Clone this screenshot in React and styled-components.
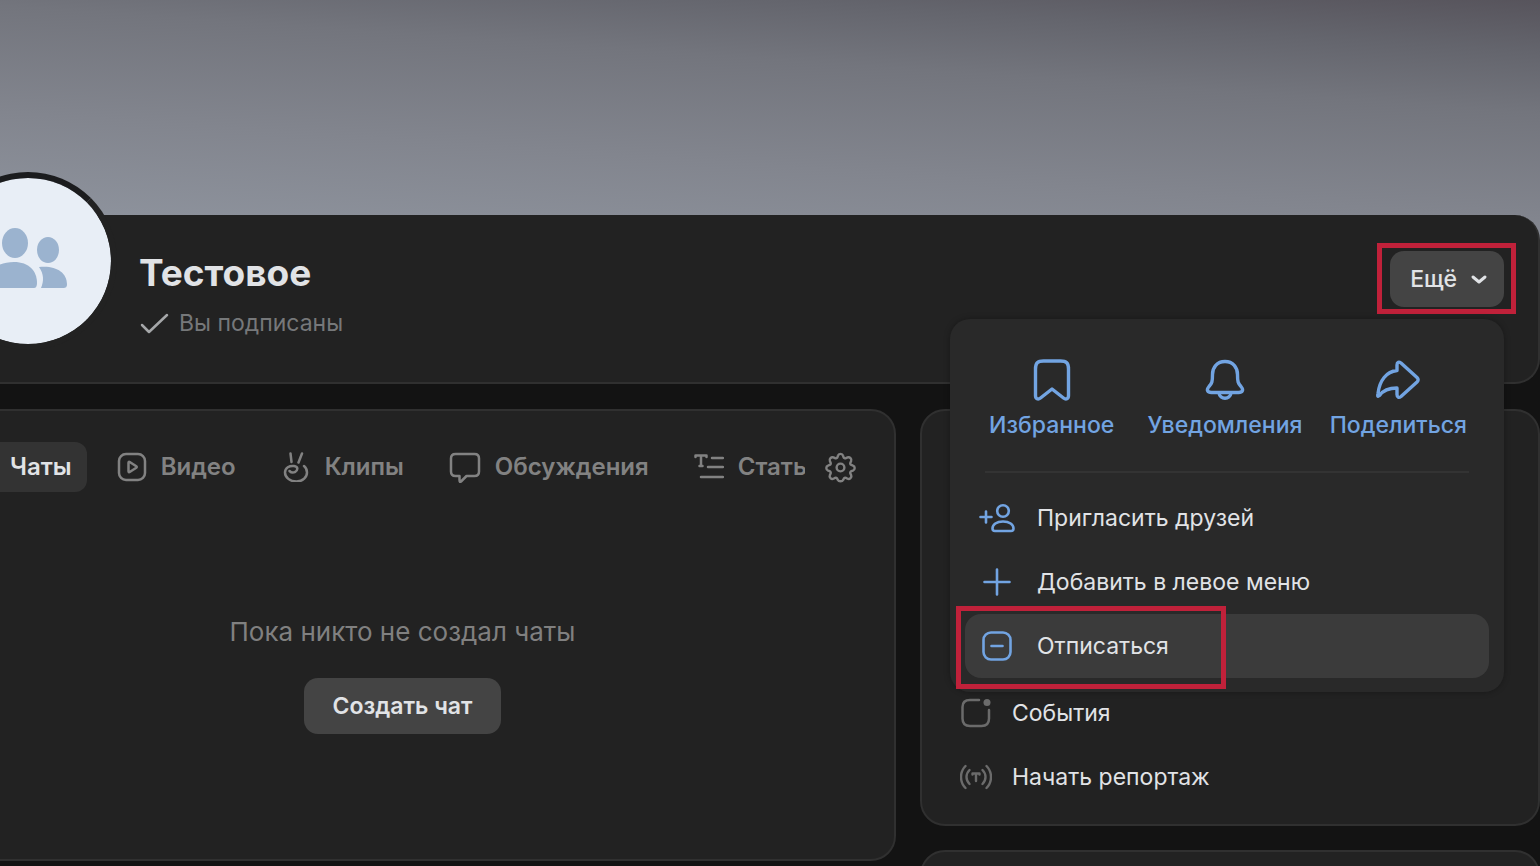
import React from 'react'
import styled, { createGlobalStyle, css } from 'styled-components'

const GlobalStyle = createGlobalStyle`
  * {
    box-sizing: border-box;
  }

  body {
    margin: 0;
    overflow: hidden;
    background: #131313;
    color: #e1e3e6;
    font-family: Inter, 'Liberation Sans', sans-serif;
    font-size: 23px;
    line-height: 32px;
  }

  button {
    border: 0;
    padding: 0;
    background: none;
    color: inherit;
    font: inherit;
    cursor: pointer;
  }

  svg {
    display: block;
    flex: none;
  }
`

const Viewport = styled.div`
  height: 100vh;
  overflow: hidden;
`

/* the left edge of the profile is scrolled out of the window */
const Page = styled.main`
  margin-left: -92px;
`

const Cover = styled.div`
  height: 240px;
  margin-bottom: -25px;
  background: linear-gradient(184deg, #57545c 0%, #64656d 15%, #73757d 32%, #82858e 62%, #8d929c 90%);
`

const card = css`
  background: #222222;
  border: 2px solid #303030;
  border-radius: 25px;
`

const Header = styled.header`
  ${card}
  position: relative;
  z-index: 1;
  display: flex;
  align-items: flex-start;
  height: 169px;
  padding: 0 34px 0 29px;
  border-top: 0;
  border-top-left-radius: 0;
`

const Avatar = styled.div`
  display: flex;
  align-items: center;
  justify-content: center;
  width: 178px;
  height: 178px;
  margin-top: -43px;
  padding-bottom: 7px;
  border: 6px solid #1b1c1e;
  border-color: #1b1c1e #222222 #222222;
  border-radius: 50%;
  background: #e8eef6;
  background-clip: padding-box;
  color: #9bb3cf;
`

const Identity = styled.div`
  flex: 1;
  padding: 36px 0 0 22px;
`

const Name = styled.h1`
  margin: 0;
  font-size: 37px;
  font-weight: 700;
  line-height: 44px;
`

const Subscribed = styled.div`
  display: flex;
  align-items: center;
  gap: 10px;
  margin-top: 12px;
  color: #76787a;

  svg {
    color: #a5a7a9;
  }
`

const MoreArea = styled.div`
  position: relative;
  margin-top: 36px;
`

const Button = styled.button`
  display: flex;
  align-items: center;
  gap: 12px;
  height: 56px;
  padding: 0 ${({ $tight }) => ($tight ? '15px 0 20px' : '29px')};
  border-radius: 14px;
  background: #444444;
  font-weight: ${({ $tight }) => ($tight ? 500 : 600)};
`

const Marker = styled.span`
  position: absolute;
  inset: ${({ $inset }) => $inset};
  border: 5px solid #c0213a;
  pointer-events: none;
`

const Menu = styled.div`
  position: absolute;
  top: 68px;
  right: 0;
  width: 554px;
  padding: 27px 15px 14px;
  border-radius: 20px;
  background: #292929;
  box-shadow: 0 0 6px rgba(0, 0, 0, 0.3);
`

const Actions = styled.div`
  display: grid;
  grid-template-columns: repeat(3, 1fr);
  padding-right: 4px;
  color: #72a4e2;
`

const Action = styled.button`
  display: flex;
  flex-direction: column;
  align-items: center;
  gap: 7px;
  padding: 12px 0;
  font-weight: 500;
`

const Divider = styled.hr`
  height: 2px;
  margin: 18px 20px 13px;
  border: 0;
  background: #333333;
`

const MenuItem = styled.button`
  position: relative;
  display: flex;
  align-items: center;
  gap: 22px;
  width: 100%;
  height: 64px;
  padding: 0 14px;
  border-radius: 16px;
  background: ${({ $hovered }) => ($hovered ? '#3b3b3b' : 'none')};
  text-align: left;

  svg {
    color: #72a4e2;
  }
`

const Columns = styled.div`
  display: grid;
  grid-template-columns: minmax(0, 1fr) 620px;
  align-items: start;
  gap: 24px;
  margin-top: 25px;
`

const Side = styled.div`
  display: grid;
  gap: 24px;
`

const Content = styled.section`
  ${card}
  min-height: 452px;
  padding: 31px 38px 0 39px;
`

const TabBar = styled.nav`
  display: flex;
  align-items: center;
  gap: 20px;
`

const Tabs = styled.div`
  display: flex;
  flex: 1;
  gap: 15px;
  min-width: 0;
  overflow: hidden;
`

const Tab = styled.button`
  display: flex;
  flex: none;
  align-items: center;
  gap: 14px;
  height: 50px;
  padding: 0 15px;
  border-radius: 12px;
  background: ${({ $active }) => ($active ? '#333333' : 'none')};
  color: ${({ $active }) => ($active ? '#e1e3e6' : '#828282')};
  font-size: 24px;
  font-weight: 600;
`

const IconButton = styled.button`
  color: #828282;
`

const Empty = styled.div`
  display: flex;
  flex-direction: column;
  align-items: center;
  gap: 30px;
  padding-top: 124px;
  color: #808080;

  p {
    margin: 0;
    font-size: 26px;
  }

  button {
    color: #e1e3e6;
  }
`

const Links = styled.section`
  ${card}
  display: flex;
  flex-direction: column;
  justify-content: flex-end;
  min-height: ${({ $tall }) => ($tall ? '417px' : '120px')};
  padding: 12px 38px 15px;
`

const LinkRow = styled.a`
  display: flex;
  align-items: center;
  gap: 20px;
  height: 64px;
  color: #e1e3e6;
  text-decoration: none;

  svg {
    color: #6b6b6b;
  }
`

function Icon({ size = 32, box = size, stroke = 2.5, children }) {
  return (
    <svg
      width={size}
      height={size}
      viewBox={`0 0 ${box} ${box}`}
      fill="none"
      stroke="currentColor"
      strokeWidth={stroke}
      strokeLinecap="round"
      strokeLinejoin="round"
      aria-hidden="true"
    >
      {children}
    </svg>
  )
}

const CommunityIcon = () => (
  <svg width="84" height="64" viewBox="0 0 84 64" fill="currentColor" aria-hidden="true">
    <ellipse cx="29" cy="17" rx="13" ry="15" />
    <ellipse cx="62" cy="24" rx="11" ry="13" />
    <path d="M2 55c0-12 11-19 26-19s23 9 23 21c0 3-1 5-3 5H5c-2 0-3-2-3-7Z" />
    <path d="M53 41c16-2 28 5 28 17 0 3-1 4-4 4H55c3-7 3-14-2-21Z" />
  </svg>
)

const CheckIcon = () => (
  <Icon size={30}>
    <path d="M3 17 10 24 28 7" />
  </Icon>
)

const ChevronIcon = () => (
  <Icon size={20} stroke={3}>
    <path d="m4 8 6 5 6-5" />
  </Icon>
)

const BookmarkIcon = () => (
  <Icon size={44} stroke={3.4}>
    <path d="M5.500 11c0-6 2-8 8-8h17c6 0 8 2 8 8v26.500c0 3.500-2.500 4.500-5 2.500L22 31 10.500 40c-2.500 2-5 1-5-2.500Z" />
  </Icon>
)

const BellIcon = () => (
  <Icon size={44} stroke={3.4}>
    <path d="M22 3.500c-8 0-12.500 6-12.500 13 0 7-.5 9-3.500 12-3 3.500-1.500 6 2.500 6h27c4 0 5.500-2.500 2.500-6-3-3-3.500-5-3.500-12 0-7-4.500-13-12.500-13Z" />
    <path d="M16 35c1 7 11 7 12 0" />
  </Icon>
)

const ShareIcon = () => (
  <Icon size={44} stroke={3.4}>
    <path d="M21 12.500V7c0-3 2-3.500 4-2l16 14.500c1.500 1.500 1.500 3 0 4.500L25 38.500c-2 1.500-4 1-4-2V30C13 30 7 32.500 3.500 37.500 1.500 39 1.500 38 2 35.500 3.500 22.500 10.500 13.500 21 12.500Z" />
  </Icon>
)

const InviteIcon = () => (
  <Icon size={36} stroke={2.6}>
    <path d="M1.500 17h11M7 11.500v11" />
    <circle cx="24" cy="11" r="5.800" />
    <path d="M13.500 28.500c0-4 4-7 10.500-7s10.500 3 10.500 7c0 1.800-.8 2.500-2.500 2.500H16c-1.700 0-2.500-.7-2.500-2.500Z" />
  </Icon>
)

const PlusIcon = () => (
  <Icon size={36} stroke={2.6}>
    <path d="M5.500 18h25M18 5.500v25" />
  </Icon>
)

const MinusSquareIcon = () => (
  <Icon size={36} stroke={2.6}>
    <rect x="4.500" y="4.500" width="27" height="27" rx="7.500" />
    <path d="M12.500 18h11" />
  </Icon>
)

const VideoIcon = () => (
  <Icon size={30}>
    <rect x="2" y="2" width="26" height="26" rx="7" />
    <path d="M11.500 10.700v8.600c0 .8.600 1 1.200.7l6.600-4.300c.6-.4.6-1 0-1.400L12.700 10c-.6-.3-1.200-.1-1.200.7Z" />
  </Icon>
)

const ClipsIcon = () => (
  <Icon size={30}>
    <path d="m10.500 10-1-8.500M17.500 10.500l3.500-9" />
    <path d="M14 20c3-1.500 3.500-5.500-1-6-4.500-.5-9 1.500-9 6.500s5 9 11.500 9S26 25 26 20.500c0-3-1-5-3-6.500" />
    <path d="M14 20c-2 1-4.500 0-5.500-1" />
  </Icon>
)

const MessageIcon = () => (
  <Icon size={32}>
    <path d="M6.500 3h19c3 0 4.500 1.500 4.500 4.500v13c0 3-1.500 4.500-4.500 4.500h-8l-5 5c-1.500 1.500-2 1-2-1v-4h-4C3.500 25 2 23.500 2 20.500v-13C2 4.500 3.500 3 6.500 3Z" />
  </Icon>
)

const ArticleIcon = () => (
  <Icon size={30}>
    <path d="M1.500 5V3.500h11V5M7 3.500V14M5.500 14h3M18 6h11M14 15h15M7 25h22" />
  </Icon>
)

const GearIcon = () => (
  <Icon size={31} box={32}>
    <path d="M13.400 3.700c.7-2.300 4.500-2.300 5.200 0l.6 1.700c.4 1 1.500 1.400 2.400 1l1.700-.8c2.100-1 4.700 1.600 3.700 3.700l-.8 1.700c-.4.900 0 2 1 2.400l1.700.6c2.300.7 2.300 4.500 0 5.200l-1.700.6c-1 .4-1.400 1.500-1 2.400l.8 1.700c1 2.100-1.600 4.700-3.700 3.700l-1.700-.8c-.9-.4-2 0-2.400 1l-.6 1.200c-.7 1.700-4.500 1.700-5.200 0l-.6-1.200c-.4-1-1.500-1.400-2.400-1l-1.700.8c-2.100 1-4.700-1.600-3.700-3.700l.8-1.700c.4-.9 0-2-1-2.400l-1.700-.6c-2.300-.7-2.300-4.500 0-5.200l1.700-.6c1-.4 1.400-1.500 1-2.400L5 9.300C4 7.200 6.600 4.600 8.700 5.600l1.700.8c.9.400 2 0 2.400-1Z" />
    <circle cx="16" cy="16" r="4" />
  </Icon>
)

const EventsIcon = () => (
  <Icon>
    <path d="M19 3H10C5 3 2.500 5.500 2.500 10v11.500C2.500 26.500 5 29 10 29h11.500c5 0 7.500-2.500 7.500-7.500V13" />
    <circle cx="27" cy="5.500" r="3.500" fill="currentColor" stroke="none" />
  </Icon>
)

const BroadcastIcon = () => (
  <Icon stroke={2.4}>
    <path d="M5.500 5C-.5 11-.5 21 5.500 27M26.500 5c6 6 6 16 0 22M9.500 9c-4 4-4 10 0 14M22.500 9c4 4 4 10 0 14" />
    <path d="M12.500 13.500v-1h7v1M16 12.500V20" />
  </Icon>
)

const actions = [
  { label: 'Избранное', icon: BookmarkIcon },
  { label: 'Уведомления', icon: BellIcon },
  { label: 'Поделиться', icon: ShareIcon }
]

const menuItems = [
  { label: 'Пригласить друзей', icon: InviteIcon },
  { label: 'Добавить в левое меню', icon: PlusIcon },
  { label: 'Отписаться', icon: MinusSquareIcon, hovered: true }
]

const tabs = [
  { label: 'Чаты', icon: MessageIcon, active: true },
  { label: 'Видео', icon: VideoIcon },
  { label: 'Клипы', icon: ClipsIcon },
  { label: 'Обсуждения', icon: MessageIcon },
  { label: 'Статьи', icon: ArticleIcon }
]

const links = [
  { label: 'События', icon: EventsIcon },
  { label: 'Начать репортаж', icon: BroadcastIcon }
]

function MoreMenu() {
  return (
    <MoreArea>
      <Button $tight aria-expanded="true">
        Ещё
        <ChevronIcon />
      </Button>
      <Marker $inset="-8px -12px -7px -13px" />
      <Menu>
        <Actions>
          {actions.map(({ label, icon: ActionIcon }) => (
            <Action key={label}>
              <ActionIcon />
              {label}
            </Action>
          ))}
        </Actions>
        <Divider />
        {menuItems.map(({ label, icon: ItemIcon, hovered }) => (
          <MenuItem key={label} $hovered={hovered}>
            <ItemIcon />
            {label}
            {hovered && <Marker $inset="-8px 263px -11px -9px" />}
          </MenuItem>
        ))}
      </Menu>
    </MoreArea>
  )
}

export default function App() {
  return (
    <>
      <GlobalStyle />
      <Viewport>
        <Page>
          <Cover />
          <Header>
            <Avatar>
              <CommunityIcon />
            </Avatar>
            <Identity>
              <Name>Тестовое</Name>
              <Subscribed>
                <CheckIcon />
                Вы подписаны
              </Subscribed>
            </Identity>
            <MoreMenu />
          </Header>
          <Columns>
            <Content>
              <TabBar>
                <Tabs>
                  {tabs.map(({ label, icon: TabIcon, active }) => (
                    <Tab key={label} $active={active}>
                      <TabIcon />
                      {label}
                    </Tab>
                  ))}
                </Tabs>
                <IconButton aria-label="Настройки">
                  <GearIcon />
                </IconButton>
              </TabBar>
              <Empty>
                <p>Пока никто не создал чаты</p>
                <Button>Создать чат</Button>
              </Empty>
            </Content>
            <Side>
              <Links $tall>
                {links.map(({ label, icon: LinkIcon }) => (
                  <LinkRow key={label} href="#">
                    <LinkIcon />
                    {label}
                  </LinkRow>
                ))}
              </Links>
              <Links />
            </Side>
          </Columns>
        </Page>
      </Viewport>
    </>
  )
}
